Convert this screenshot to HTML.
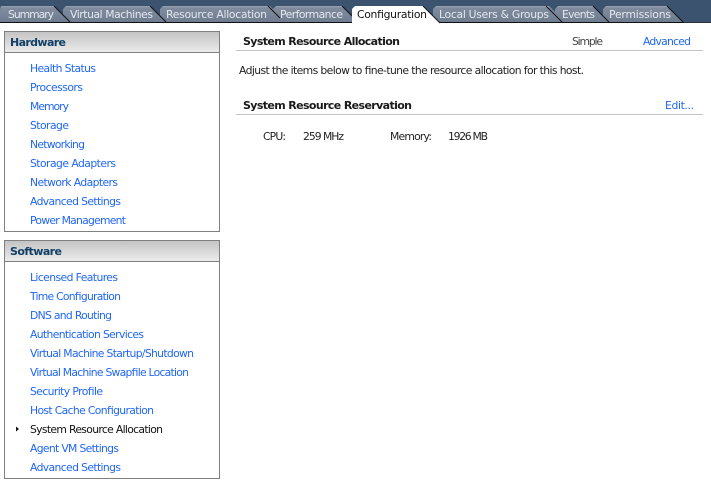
<!DOCTYPE html>
<html><head><meta charset="utf-8"><style>
html,body{margin:0;padding:0;background:#fff;width:711px;height:498px;overflow:hidden}
svg{display:block}
text{font-family:"DejaVu Sans",sans-serif;font-size:10.8px}
.l{fill:#1f66f5}.k{fill:#222}
.t{fill:#e4e9ef}
.b{font-weight:bold;fill:#1a1a1a;font-size:11px}
.h{font-weight:bold;fill:#123f66;font-size:11px}
</style></head><body>
<svg width="711" height="498" viewBox="0 0 711 498" xmlns="http://www.w3.org/2000/svg">
<defs>
<linearGradient id="tb" x1="0" y1="0" x2="0" y2="1"><stop offset="0" stop-color="#98a3b3"/><stop offset=".12" stop-color="#808c9e"/><stop offset="1" stop-color="#6f7b8f"/></linearGradient>
<linearGradient id="hd" x1="0" y1="0" x2="0" y2="1"><stop offset="0" stop-color="#c4c4c4"/><stop offset="1" stop-color="#ebebeb"/></linearGradient>
</defs>
<rect width="711" height="22" fill="#3c5370"/>
<rect y="22" width="684" height="1" fill="#111"/>
<rect x="684" y="22" width="27" height="1" fill="#333"/>
<!-- tabs, drawn right to left -->
<g stroke-width="1">
<path d="M603 22V9l3-3H667L683 22Z" fill="url(#tb)"/><path d="M667 6L683 22" stroke="#111"/>
<path d="M555 22V9l3-3H593L609 22Z" fill="url(#tb)"/><path d="M593 6L609 22" stroke="#111"/>
<path d="M433 22V9l3-3H549L561 18V22Z" fill="url(#tb)"/><path d="M546 6L562 22" stroke="#111"/>
<path d="M273 22V9l3-3H342L352 16V22Z" fill="url(#tb)"/><path d="M342 6L352 16" stroke="#111"/>
<path d="M160 22V9l3-3H270L286 22Z" fill="url(#tb)"/><path d="M268 6L280 18" stroke="#111"/>
<path d="M63 22V9l3-3H150L166 22Z" fill="url(#tb)"/><path d="M150 6L166 22" stroke="#111"/>
<path d="M0 22V9l1-3H54L70 22Z" fill="url(#tb)"/><path d="M54 6L70 22" stroke="#111"/>
<path d="M352 23V9l3-3H423L440 23Z" fill="#fff"/><path d="M423 6L440 23" stroke="#111"/>
</g>
<text class="t" x="8" y="18" textLength="46">Summary</text>
<text class="t" x="70" y="18" textLength="83">Virtual Machines</text>
<text class="t" x="166" y="18" textLength="101">Resource Allocation</text>
<text class="t" x="280" y="18" textLength="63">Performance</text>
<text x="357" y="18" textLength="70" fill="#111">Configuration</text>
<text class="t" x="439" y="18" textLength="110">Local Users &amp; Groups</text>
<text class="t" x="562" y="18" textLength="33">Events</text>
<text class="t" x="609" y="18" textLength="62">Permissions</text>

<!-- Hardware panel -->
<rect x="4.5" y="31.5" width="215" height="200" fill="#fff" stroke="#808080"/>
<rect x="5" y="32" width="214" height="20" fill="url(#hd)"/>
<rect x="5" y="52" width="214" height="1" fill="#808080"/>
<text class="h" x="10" y="46" textLength="56">Hardware</text>
<text class="l" x="30" y="72" textLength="66">Health Status</text>
<text class="l" x="30" y="91" textLength="53">Processors</text>
<text class="l" x="30" y="110" textLength="39">Memory</text>
<text class="l" x="30" y="129" textLength="39">Storage</text>
<text class="l" x="30" y="148" textLength="55">Networking</text>
<text class="l" x="30" y="167" textLength="86">Storage Adapters</text>
<text class="l" x="30" y="186" textLength="88">Network Adapters</text>
<text class="l" x="30" y="205" textLength="91">Advanced Settings</text>
<text class="l" x="30" y="224" textLength="96">Power Management</text>

<!-- Software panel -->
<rect x="4.5" y="240.5" width="215" height="238" fill="#fff" stroke="#808080"/>
<rect x="5" y="241" width="214" height="20" fill="url(#hd)"/>
<rect x="5" y="261" width="214" height="1" fill="#808080"/>
<text class="h" x="10" y="255" textLength="52">Software</text>
<text class="l" x="30" y="281" textLength="88">Licensed Features</text>
<text class="l" x="30" y="300" textLength="91">Time Configuration</text>
<text class="l" x="30" y="319" textLength="82">DNS and Routing</text>
<text class="l" x="30" y="338" textLength="114">Authentication Services</text>
<text class="l" x="30" y="357" textLength="164">Virtual Machine Startup/Shutdown</text>
<text class="l" x="30" y="376" textLength="159">Virtual Machine Swapfile Location</text>
<text class="l" x="30" y="395" textLength="73">Security Profile</text>
<text class="l" x="30" y="414" textLength="124">Host Cache Configuration</text>
<path d="M16 426.5l3 2.5-3 2.5Z" fill="#111"/>
<text x="30" y="433" textLength="133" fill="#111">System Resource Allocation</text>
<text class="l" x="30" y="452" textLength="89">Agent VM Settings</text>
<text class="l" x="30" y="471" textLength="91">Advanced Settings</text>

<!-- Right content -->
<text class="b" x="243" y="45" textLength="157">System Resource Allocation</text>
<text x="572" y="45" textLength="31" fill="#444">Simple</text>
<text class="l" x="643" y="45" textLength="48">Advanced</text>
<rect x="236" y="50" width="467" height="1" fill="#c4c4c4"/>
<text x="239" y="74" textLength="345" fill="#222">Adjust the items below to fine-tune the resource allocation for this host.</text>
<text class="b" x="243" y="109" textLength="169">System Resource Reservation</text>
<text class="l" x="665" y="109" textLength="29">Edit...</text>
<rect x="236" y="114" width="467" height="1" fill="#c4c4c4"/>
<text class="k" x="263" y="140" textLength="23">CPU:</text>
<text class="k" x="303" y="140" textLength="41">259 MHz</text>
<text class="k" x="390" y="140" textLength="42">Memory:</text>
<text class="k" x="448" y="140" textLength="40">1926 MB</text>
</svg>
</body></html>
